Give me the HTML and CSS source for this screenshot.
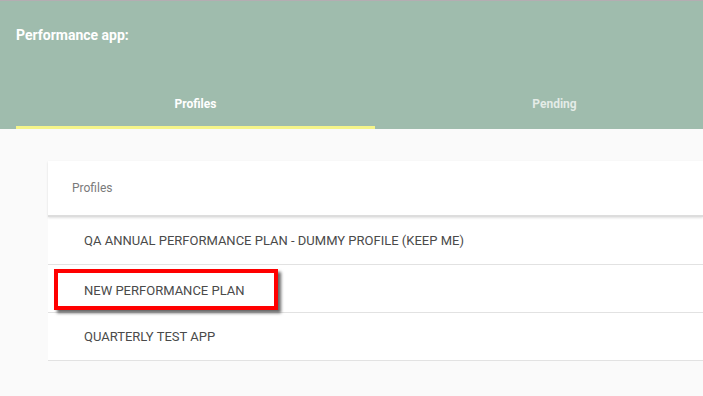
FILE: index.html
```html
<!DOCTYPE html>
<html>

<head>
    <title>Performance app</title>
    <link rel="stylesheet" href="styles.css">
</head>

<body>
    <div class="header">
        <div class="title">Performance app:</div>
        <div class="tabs">
            <div class="tab active">Profiles</div>
            <div class="tab">Pending</div>
        </div>
    </div>

    <div class="content">
        <div class="card">
            <div class="card-header">Profiles</div>
            <div class="row">QA ANNUAL PERFORMANCE PLAN - DUMMY PROFILE (KEEP ME)</div>
            <div class="row highlight-row">
                <span class="highlight">NEW PERFORMANCE PLAN</span>
            </div>
            <div class="row">QUARTERLY TEST APP</div>
        </div>
    </div>
</body>

</html>
```

FILE: styles.css
```css
body {
    margin: 0;
    background-color: #fafafa;
    font-family: Roboto, "Liberation Sans", sans-serif;
    height: 396px;
    overflow: hidden;
}

.header {
    background-color: #9fbcad;
    border-top: 1px solid #b4adb2;
    padding: 0 0 0 16px;
    height: 129px;
    display: flex;
    flex-direction: column;
    box-sizing: border-box;
}

.title {
    color: #fff;
    font-weight: bold;
    font-size: 14px;
    padding-top: 26px;
    height: 60px;
    box-sizing: border-box;
}

.tabs {
    display: flex;
    margin-top: auto;
}

.tab {
    width: 359px;
    flex-shrink: 0;
    text-align: center;
    font-size: 12px;
    font-weight: bold;
    color: rgba(255, 255, 255, 0.72);
    padding: 35px 0 15px;
    border-bottom: 3px solid transparent;
}

.tab.active {
    color: #fff;
    border-bottom-color: #f5f58a;
}

.content {
    padding: 32px 0 0 48px;
}

.card {
    background-color: #fff;
}

.card-header {
    height: 56px;
    line-height: 54px;
    padding-left: 24px;
    font-size: 12px;
    color: #7a7a7a;
    border-bottom: 2px solid #ddd;
    box-shadow: 0 1px 2px rgba(0, 0, 0, 0.12);
    box-sizing: border-box;
}

.row {
    height: 48px;
    line-height: 47px;
    padding-left: 36px;
    font-size: 13px;
    color: #4a4a4a;
    border-bottom: 1px solid #e2e2e2;
    box-sizing: border-box;
}

.highlight-row {
    position: relative;
}

.highlight {
    position: absolute;
    left: 6px;
    top: 4px;
    width: 224px;
    height: 41px;
    line-height: 35px;
    padding-left: 26px;
    border: 4px solid #f00;
    box-sizing: border-box;
    box-shadow: 3px 3px 3px rgba(0, 0, 0, 0.6);
}
```
